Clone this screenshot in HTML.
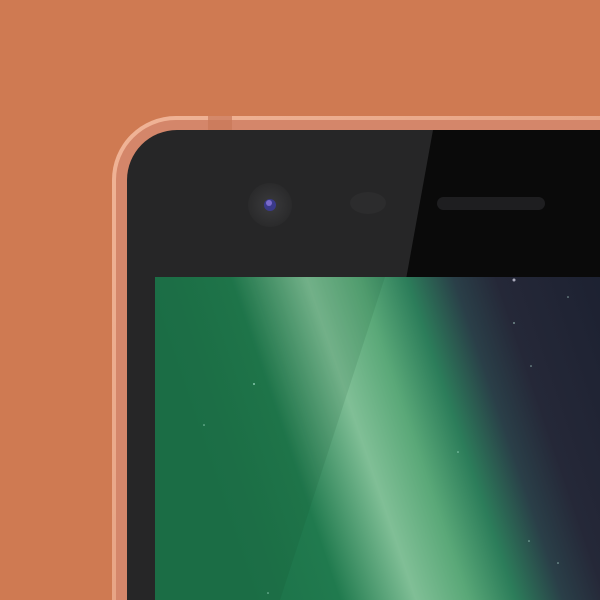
<!DOCTYPE html>
<html><head><style>html,body{margin:0;padding:0;background:#cf7a52;width:600px;height:600px;overflow:hidden}svg{display:block}</style></head>
<body>
<svg width="600" height="600" viewBox="0 0 600 600" xmlns="http://www.w3.org/2000/svg">
<defs>
<linearGradient id="scr" x1="200" y1="440" x2="626" y2="295" gradientUnits="userSpaceOnUse">
<stop offset="0" stop-color="#1d7249"/>
<stop offset="0.18" stop-color="#207a4e"/>
<stop offset="0.34" stop-color="#80bf96"/>
<stop offset="0.45" stop-color="#5aa878"/>
<stop offset="0.55" stop-color="#2c7d5a"/>
<stop offset="0.65" stop-color="#2a3f48"/>
<stop offset="0.74" stop-color="#252838"/>
<stop offset="1" stop-color="#1b2030"/>
</linearGradient>
<linearGradient id="rim" x1="0" y1="0" x2="1" y2="1">
<stop offset="0" stop-color="#f0b497"/>
<stop offset="1" stop-color="#d98d6a"/>
</linearGradient>
<radialGradient id="cam"><stop offset="0" stop-color="#3a3a3c"/><stop offset="1" stop-color="#2a2a2b"/></radialGradient>
</defs>
<rect width="600" height="600" fill="#cf7a52"/>
<rect x="112" y="116" width="620" height="620" rx="64" fill="url(#rim)"/>
<rect x="116" y="120" width="612" height="612" rx="60" fill="#d4866a"/>
<rect x="208" y="116" width="24" height="14" fill="#c97858" opacity="0.7"/>
<rect x="127" y="130" width="600" height="600" rx="50" fill="#262627"/>
<path d="M433 130 L700 130 L700 700 L330 700 Z" fill="#0a0a0a"/>
<circle cx="270" cy="205" r="22" fill="url(#cam)"/>
<circle cx="270" cy="205" r="6" fill="#3a3a8a"/>
<circle cx="269" cy="203" r="3" fill="#7a6acc"/>
<ellipse cx="368" cy="203" rx="18" ry="11" fill="#2c2c2d"/>
<rect x="437" y="197" width="108" height="13" rx="6.5" fill="#1e1e20"/>
<rect x="155" y="277" width="460" height="340" fill="url(#scr)"/>
<path d="M155 277 L385 277 L280 600 L155 600 Z" fill="#0d4a2c" opacity="0.12"/>
<g fill="#cfe" opacity="0.6">
<circle cx="254" cy="384" r="1"/><circle cx="204" cy="425" r="0.8"/><circle cx="514" cy="323" r="0.9"/>
<circle cx="531" cy="366" r="0.8"/><circle cx="568" cy="297" r="0.8"/><circle cx="529" cy="541" r="0.8"/>
<circle cx="458" cy="452" r="0.8"/><circle cx="558" cy="563" r="0.8"/><circle cx="268" cy="593" r="0.8"/>
</g>
<circle cx="514" cy="280" r="1.5" fill="#aab"/>
</svg>
</body></html>
